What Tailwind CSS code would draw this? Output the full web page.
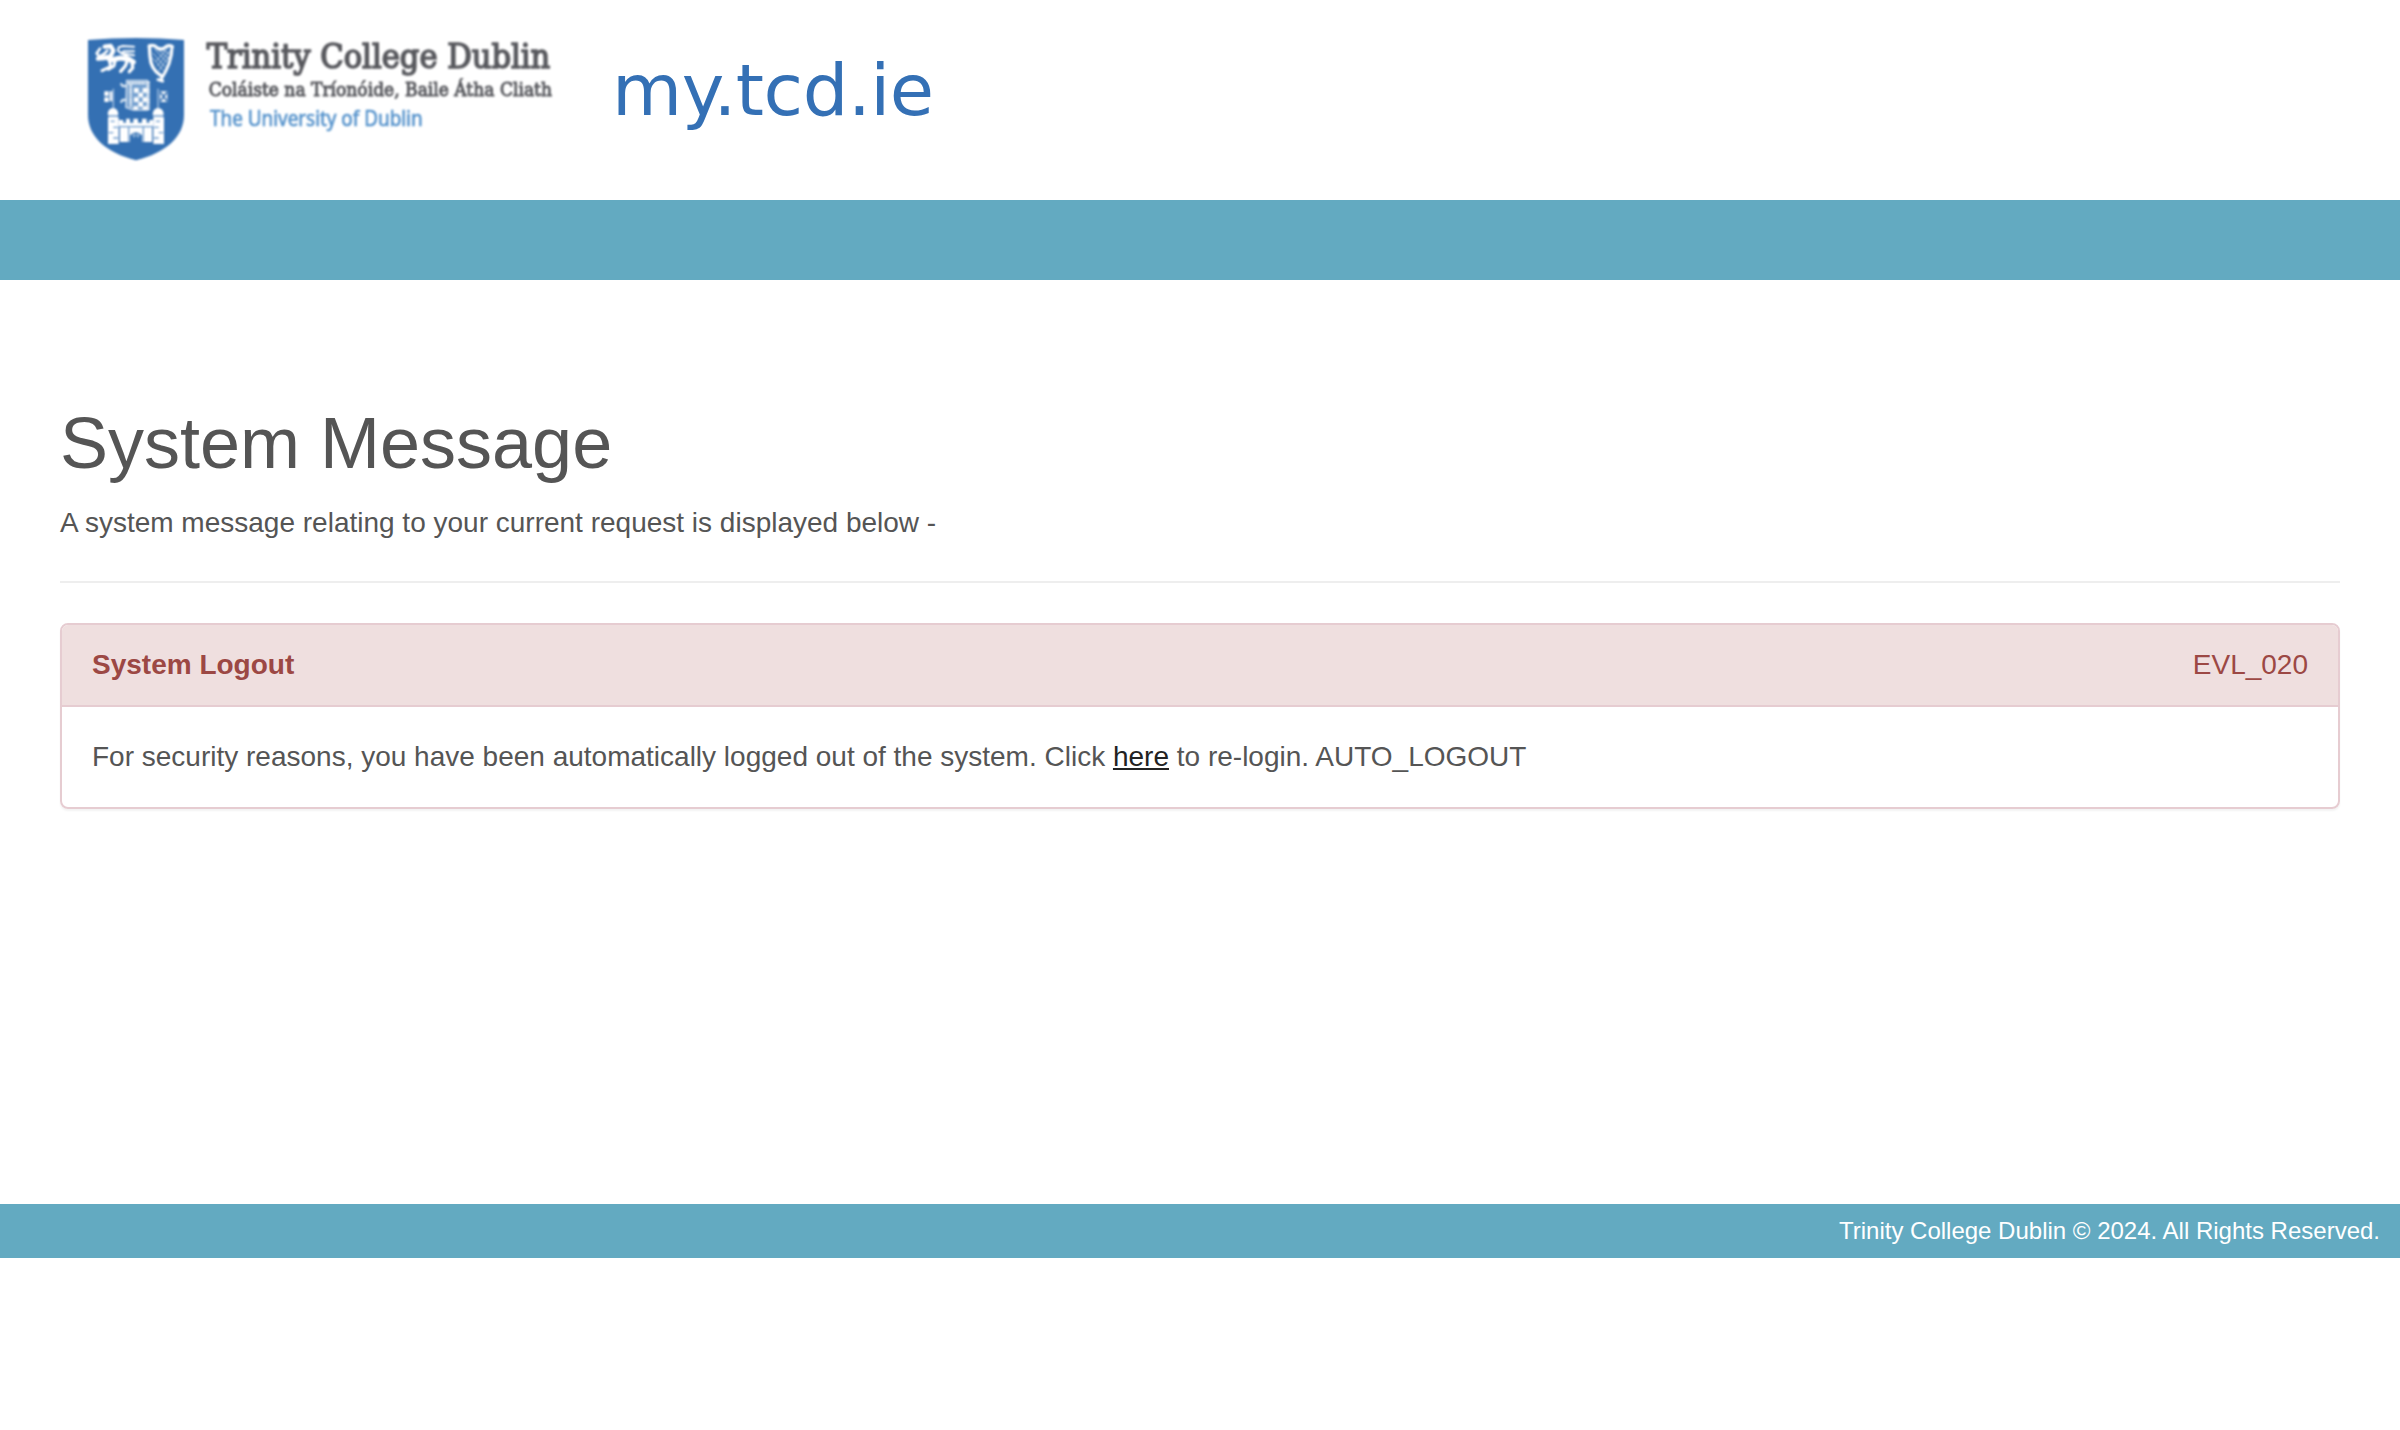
<!DOCTYPE html>
<html lang="en">
<head>
<meta charset="utf-8">
<title>my.tcd.ie</title>
<script src="https://cdn.jsdelivr.net/npm/@tailwindcss/browser@4"></script>
</head>
<body class="bg-white text-[#555] text-[28px] leading-10 font-['Liberation_Sans',Arial,sans-serif]">
<header class="h-[200px] flex items-start pl-[70px] pt-5">
  <svg class="w-[520px] h-[150px] shrink-0 blur-[0.8px]" viewBox="0 0 1560 450" role="img" aria-label="Trinity College Dublin">
    <!-- shield -->
    <path d="M54 60Q125 54 198 54Q270 54 342 60V285C342 350 288 398 198 421C108 398 54 350 54 285Z" fill="#3470b3"/>
    <!-- lion -->
    <g fill="none" stroke="#fff" stroke-linecap="round" stroke-linejoin="round">
      <path d="M104 80L122 78L130 92L122 108L104 114L84 116" stroke-width="13"/>
      <path d="M90 86L80 100L88 110L102 102L112 92" stroke-width="8"/>
      <path d="M110 112L124 120L150 114L178 118L190 126" stroke-width="15"/>
      <path d="M118 122L122 140L96 152M136 120L132 138L116 148" stroke-width="9"/>
      <path d="M186 124L188 144L178 155M172 122L166 138L152 154" stroke-width="10"/>
      <path d="M192 124L170 108L154 100L160 94H192M146 82L158 78L192 80M146 82L144 92L154 100L192 106" stroke-width="6"/>
    </g>
    <!-- harp -->
    <g fill="none" stroke="#fff" stroke-linecap="round">
      <path d="M238 78L240 108Q242 148 272 166" stroke-width="10"/>
      <path d="M238 78Q252 72 262 84Q276 92 288 80Q298 74 307 80" stroke-width="10"/>
      <path d="M306 82Q306 128 272 180M264 179L278 183" stroke-width="9"/>
      <path d="M254 88L290 126M266 90L296 116M278 90L302 104M250 100L284 140M248 114L280 152M294 84L258 124M300 92L262 138M300 106L266 152" stroke-width="3" opacity=".65"/>
    </g>
    <!-- book -->
    <path d="M170 182H232V270H190L168 262Z" fill="#77a2d0" stroke="#c8d9ec" stroke-width="5"/>
    <path d="M174 190H228M182 194V260M236 184V270" stroke="#fff" stroke-width="6" stroke-dasharray="8 2"/>
    <path d="M192 204h14v14h-14zM218 204h14v14h-14zM205 218h14v14h-14zM192 232h14v14h-14zM218 232h14v14h-14zM205 246h14v14h-14zM190 259h14v10h-14zM218 259h14v10h-14z" fill="#fff"/>
    <path d="M170 198H158L152 190M170 240H158L152 248" fill="none" stroke="#dbe7f3" stroke-width="7"/>
    <!-- castle -->
    <g fill="#fff">
      <path d="M113 282Q114 266 129 264Q144 266 145 282L142 292H146V372H114V292H117ZM248 282Q250 266 264 264Q280 266 281 282L278 292H282V372H250V292H251Z"/>
      <path d="M146 300H160V308H168V296H180V308H190V296H204V308H216V296H230V308H238V300H250V318H146Z"/>
      <path d="M150 318H246V366H216V346Q198 328 180 346V366H150Z"/>
      <path d="M103 214H116V228H103ZM103 232H116V246H103ZM119 214H127V244H119ZM270 214L292 214V246H270Z"/>
    </g>
    <path d="M130 206V264M264 206V264" stroke="#a9c5e3" stroke-width="4"/>
    <path d="M271 216L291 244M291 216L271 244" stroke="#3470b3" stroke-width="5"/>
    <path d="M114 288H145M250 288H282M122 304H134M130 322H144M116 338H130M130 354H144M258 304H270M252 322H266M266 338H280M252 354H266M148 320H248M176 322V366M220 322V366" stroke="#6e9bcd" stroke-width="4"/>
    <path d="M184 348Q198 330 212 348V366H184Z" fill="#3470b3"/><path d="M186 346H210M192 338V354M204 338V354" stroke="#a9c5e3" stroke-width="3"/>
    <!-- wordmark -->
    <g font-family="'DejaVu Serif', serif" fill="#58595e" stroke="#58595e">
      <text x="410" y="143" font-size="98" stroke-width="5" textLength="1031" lengthAdjust="spacingAndGlyphs">Trinity College Dublin</text>
      <text x="416" y="229" font-size="57" stroke-width="3" textLength="1030" lengthAdjust="spacingAndGlyphs">Coláiste na Tríonóide, Baile Átha Cliath</text>
    </g>
    <text x="420" y="317" font-family="'Noto Sans', sans-serif" font-size="63" fill="#5693cc" stroke="#5693cc" stroke-width="2" textLength="638" lengthAdjust="spacingAndGlyphs">The University of Dublin</text>
  </svg>
  <div class="ml-[22px] mt-7 text-[72px] leading-[84px] tracking-[-0.5px] text-[#3470b5] font-['DejaVu_Sans',sans-serif]">my.tcd.ie</div>
</header>
<div class="h-20 bg-[#63aac1]"></div>
<main class="h-[924px] px-[60px] pt-[123px]">
  <h1 class="text-[72px] leading-20">System Message</h1>
  <p class="mt-5">A system message relating to your current request is displayed below -</p>
  <hr class="mt-[38px] border-t-2 border-[#eee]">
  <section class="mt-10 h-[186px] border-2 border-[#e6ccd1] rounded-lg shadow-[0_2px_2px_rgba(0,0,0,0.05)] overflow-hidden">
    <div class="h-[82px] px-[30px] flex items-center justify-between bg-[#efdfdf] border-b-2 border-[#e6ccd1] text-[#9c4844]">
      <h2 class="font-bold">System Logout</h2>
      <span>EVL_020</span>
    </div>
    <div class="px-[30px] pt-[30px]">For security reasons, you have been automatically logged out of the system. Click <a href="#" class="text-[#222] underline decoration-2 underline-offset-2">here</a> to re-login. AUTO_LOGOUT</div>
  </section>
</main>
<footer class="h-[54px] pr-5 flex items-center justify-end bg-[#63aac1] text-white text-2xl">Trinity College Dublin © 2024. All Rights Reserved.</footer>
</body>
</html>
